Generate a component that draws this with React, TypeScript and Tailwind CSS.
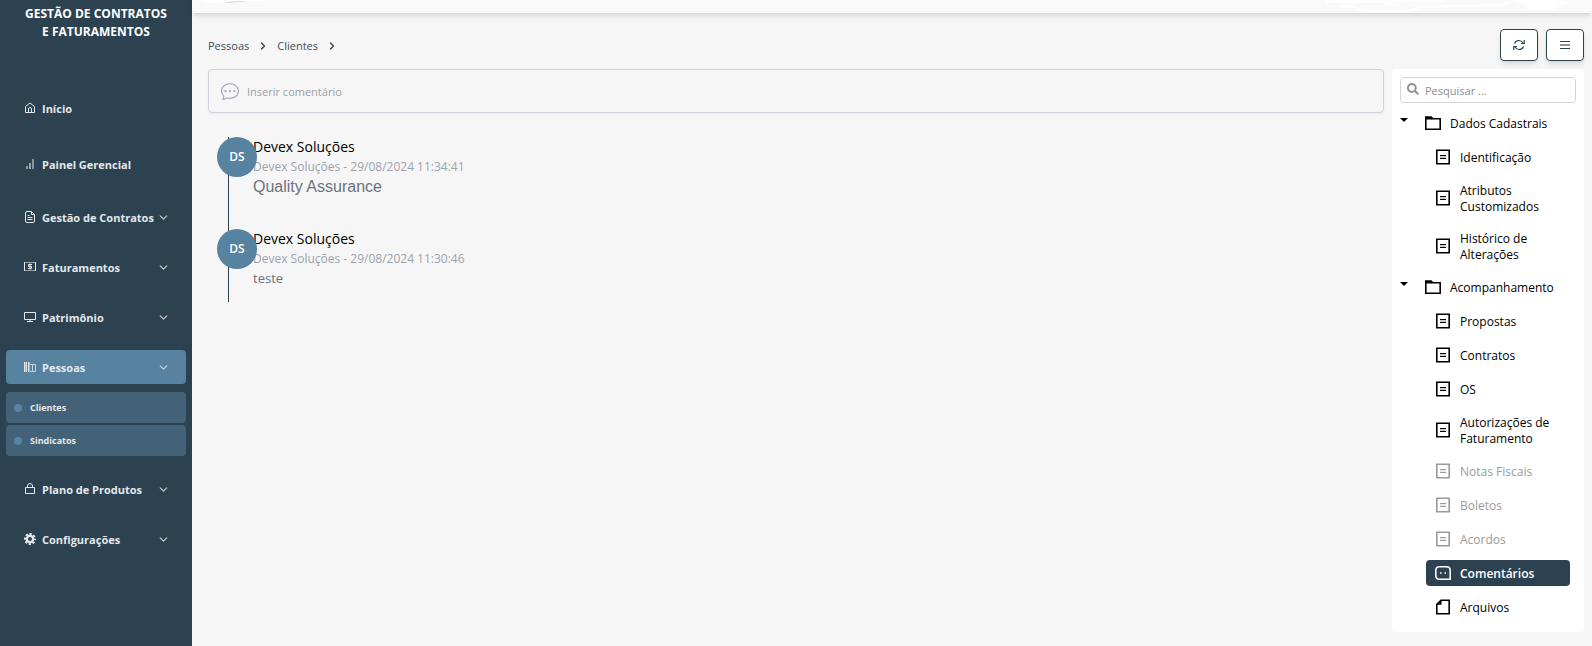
import { useState } from "react";
import type { ReactNode } from "react";
import { BsChatDots } from "react-icons/bs";
import { FaSearch } from "react-icons/fa";
import { ChevronDown, ChevronRight } from "lucide-react";

type MenuItem = {
  name: string;
  icon: ReactNode;
  space: string;
  children?: string[];
};

type TreeItem = {
  name: string;
  kind?: "chat" | "file";
  disabled?: boolean;
};

const HomeIcon = () => (
  <svg width="12" height="12" viewBox="0 0 12 12" fill="none" stroke="currentColor">
    <path d="M1.5 10.500V4.500L6 1l4.500 3.500v6z" />
    <path d="M4.500 10.500V7Q4.500 5.500 6 5.500T7.500 7v3.500" />
  </svg>
);

const BarsIcon = () => (
  <svg width="12" height="12" viewBox="0 0 12 12" fill="currentColor">
    <path d="M2 8h2v3H2z" opacity=".55" />
    <path d="M5 5h2v6H5z" opacity=".6" />
    <path d="M8 1h2v10H8z" opacity=".5" />
  </svg>
);

const DocIcon = () => (
  <svg width="12" height="12" viewBox="0 0 12 12" fill="none" stroke="currentColor">
    <path d="M3 .5h4.500l3 3V10q0 1.500-1.500 1.500H3Q1.500 11.500 1.500 10V2Q1.500.5 3 .5z" />
    <path d="M7.500.5v3h3M3.500 6.500h5M3.500 8.500h5M3.500 4.500h2" />
  </svg>
);

const FinanceIcon = () => (
  <svg width="12" height="12" viewBox="0 0 12 12" fill="none" stroke="currentColor">
    <path d="M.5 1v9M11.500 1v9" />
    <path d="M1 1.500h10M1 9.500h10" opacity=".6" />
    <path d="M8 3.500H4.500v2h3v2H4M6 2.500v6" />
  </svg>
);

const MonitorIcon = () => (
  <svg width="12" height="12" viewBox="0 0 12 12" fill="none" stroke="currentColor">
    <path d="M.500 1.500h11v7H.500zM6 8.500v2M3 10.500h6" />
  </svg>
);

const BuildingIcon = () => (
  <svg width="12" height="12" viewBox="0 0 12 12" fill="none" stroke="currentColor">
    <path d="M.500 1v10M2.500 1v10M4.500 1v10" />
    <path d="M1.500 1v10M5.500 1v10" opacity=".5" />
    <path d="M6 3.500h5.500v7H6M8.500 4v6" opacity=".8" />
  </svg>
);

const BagIcon = () => (
  <svg width="12" height="12" viewBox="0 0 12 12" fill="none" stroke="currentColor">
    <path d="M1.500 4.500h9v6h-9zM3.500 4.500V3q0-2.500 2.500-2.500T8.500 3v1.500" />
  </svg>
);

const GearIcon = () => (
  <svg width="12" height="12" viewBox="0 0 12 12" fill="none" stroke="currentColor">
    <circle cx="6" cy="6" r="3.200" strokeWidth="2.400" />
    <circle cx="6" cy="6" r="5" strokeWidth="2" strokeDasharray="2.200 1.727" strokeDashoffset="1.100" />
  </svg>
);

const RefreshIcon = () => (
  <svg width="12" height="12" viewBox="0 0 12 12" fill="none" stroke="currentColor" strokeWidth="1.200">
    <path d="M1.500 4.500Q2.500 1.500 6 1.500q2.500 0 4 2.500M11.300 1v3.500H8" />
    <path d="M10.500 7.500Q9.500 10.500 6 10.500 3.500 10.500 2 8M.700 11V7.500H4" />
  </svg>
);

const FolderIcon = () => (
  <svg width="16" height="14" viewBox="0 0 16 14" fill="none" stroke="currentColor" strokeWidth="1.600">
    <path d="M.8 2.800h14.400v10.400H.8z" />
    <path d="M0 1.300h6l1.500 1.500" strokeWidth="2" />
  </svg>
);

const DocumentIcon = () => (
  <svg width="14" height="16" viewBox="0 0 14 16" fill="none" stroke="currentColor">
    <path d="M.8 1.200h12.400v13.600H.8z" strokeWidth="1.600" />
    <path d="M4 6.500h6M4 9.500h6" />
    <path d="M4 7.500h6M4 8.500h6" opacity=".2" />
  </svg>
);

const ChatIcon = () => (
  <svg width="16" height="14" viewBox="0 0 16 14" fill="none" stroke="currentColor" strokeWidth="1.600">
    <path d="M4.500.800h7q3.700 0 3.700 3.700v8.700H4.500Q.800 13.200.800 9.500v-5Q.800.800 4.500.800z" />
    <path d="M5 7h1.500M9.500 7H11" />
  </svg>
);

const FileIcon = () => (
  <svg width="14" height="16" viewBox="0 0 14 16">
    <path d="M5 1.300h8.200v13.400H.800V5.300z" fill="none" stroke="currentColor" strokeWidth="1.600" />
    <path d="M5.500.500v5.300H.300z" fill="currentColor" />
  </svg>
);

const menu: MenuItem[] = [
  { name: "Início", icon: <HomeIcon />, space: "mb-[22px]" },
  { name: "Painel Gerencial", icon: <BarsIcon />, space: "mb-[19px]" },
  { name: "Gestão de Contratos", icon: <DocIcon />, space: "mb-4", children: [] },
  { name: "Faturamentos", icon: <FinanceIcon />, space: "mb-4", children: [] },
  { name: "Patrimônio", icon: <MonitorIcon />, space: "mb-4", children: [] },
  { name: "Pessoas", icon: <BuildingIcon />, space: "mb-4", children: ["Clientes", "Sindicatos"] },
  { name: "Plano de Produtos", icon: <BagIcon />, space: "mb-4", children: [] },
  { name: "Configurações", icon: <GearIcon />, space: "mb-4", children: [] },
];

const tree: { name: string; items: TreeItem[] }[] = [
  {
    name: "Dados Cadastrais",
    items: [
      { name: "Identificação" },
      { name: "Atributos Customizados" },
      { name: "Histórico de Alterações" },
    ],
  },
  {
    name: "Acompanhamento",
    items: [
      { name: "Propostas" },
      { name: "Contratos" },
      { name: "OS" },
      { name: "Autorizações de Faturamento" },
      { name: "Notas Fiscais", disabled: true },
      { name: "Boletos", disabled: true },
      { name: "Acordos", disabled: true },
      { name: "Comentários", kind: "chat" },
      { name: "Arquivos", kind: "file" },
    ],
  },
];

const comments = [
  { author: "Devex Soluções", date: "29/08/2024 11:34:41", text: "Quality Assurance", rich: true },
  { author: "Devex Soluções", date: "29/08/2024 11:30:46", text: "teste", rich: false },
];

function Sidebar() {
  return (
    <aside className="w-48 shrink-0 bg-[#2c4251] px-1.5 pt-[5px] text-[#e4e8eb]">
      <h1 className="text-center text-[12px] leading-[18px] font-bold text-white">
        GESTÃO DE CONTRATOS
        <br />E FATURAMENTOS
      </h1>

      <nav className="mt-[50px]">
        {menu.map((item) => (
          <div key={item.name} className={item.space}>
            <button
              className={`flex h-[34px] w-full items-center rounded pr-4 pl-[18px] text-[11px] font-bold ${
                item.name === "Pessoas" ? "bg-[#5782a0]" : ""
              }`}
            >
              <span className="flex w-3 shrink-0 justify-center">{item.icon}</span>
              <span className="ml-1.5 grow pt-0.5 text-left whitespace-nowrap">{item.name}</span>
              {item.children && <ChevronDown size={13} strokeWidth={2.5} className="shrink-0 opacity-80" />}
            </button>

            {item.children && item.children.length > 0 && (
              <ul className="mt-2 space-y-0.5">
                {item.children.map((child) => (
                  <li key={child}>
                    <a href="#" className="flex h-[31px] items-center gap-2 rounded bg-[#436278] pl-2 text-[9px] font-bold">
                      <span className="size-2 rounded-full bg-[#5782a0]" />
                      {child}
                    </a>
                  </li>
                ))}
              </ul>
            )}
          </div>
        ))}
      </nav>
    </aside>
  );
}

function Comments() {
  return (
    <section className="min-w-0 grow">
      <label className="flex h-11 items-center gap-2 rounded border border-[#d1d3dc] px-3 text-[#a0a4af] shadow-xs">
        <BsChatDots size={18} className="shrink-0" />
        <input
          type="text"
          aria-label="Inserir comentário"
          placeholder="Inserir comentário"
          className="grow bg-transparent pt-0.5 text-[11px] outline-none placeholder:text-[#9ca0ab]"
        />
      </label>

      <ul className="mt-6 ml-5 w-fit border-l border-[#2c4251]">
        {comments.map((comment) => (
          <li key={comment.date} className="relative h-[92px] pl-6 last:h-[73px]">
            <p className="text-[14px] leading-[19px] text-black">{comment.author}</p>
            <p className="text-[12px] leading-[22px] text-[#9ca3af]">
              {comment.author} - {comment.date}
            </p>
            <p
              className={
                comment.rich
                  ? "font-['Liberation_Sans',sans-serif] text-[16px] leading-[18px] text-[#6b7280]"
                  : "text-[13px] leading-4 text-[#6b7280]"
              }
            >
              {comment.text}
            </p>
            <span className="absolute top-0 -left-3 flex size-10 items-center justify-center rounded-full bg-[#5782a0] text-[12px] font-semibold text-white">
              DS
            </span>
          </li>
        ))}
      </ul>
    </section>
  );
}

function TreePanel() {
  const [active, setActive] = useState("Comentários");

  return (
    <aside className="w-48 shrink-0 rounded bg-white px-2 pt-2 pb-3 text-[12px] text-black">
      <label className="flex h-[26px] items-center gap-1.5 rounded border border-[#d5d5d5] px-1.5 text-[#929292]">
        <FaSearch size={12} className="mb-0.5 shrink-0" />
        <input
          type="text"
          aria-label="Pesquisar"
          placeholder="Pesquisar ..."
          className="w-full min-w-0 bg-transparent pt-0.5 text-[11px] outline-none placeholder:text-[#8c8c8c]"
        />
      </label>

      <div className="mt-[7px] flex flex-col gap-2">
        {tree.map((group) => (
          <div key={group.name} className="flex flex-col gap-2">
            <button className="flex h-[26px] items-center text-left">
              <svg width="8" height="4" viewBox="0 0 8 4" className="mb-1.5 shrink-0">
                <path d="M0 0h8L4 4z" fill="currentColor" />
              </svg>
              <span className="mr-[9px] ml-[17px]">
                <FolderIcon />
              </span>
              <span className="pt-0.5">{group.name}</span>
            </button>

            {group.items.map((item) => (
              <button
                key={item.name}
                disabled={item.disabled}
                onClick={() => setActive(item.name)}
                className={`mr-1.5 ml-[26px] flex min-h-[26px] items-center rounded py-[3px] pr-5 pl-[9px] text-left leading-4 disabled:text-[#9a9a9a] ${
                  active === item.name ? "bg-[#2c4251] font-semibold text-white" : ""
                }`}
              >
                <span className="mr-[9px] flex w-4 shrink-0 justify-center">
                  {item.kind === "chat" ? <ChatIcon /> : item.kind === "file" ? <FileIcon /> : <DocumentIcon />}
                </span>
                <span className="pt-0.5">{item.name}</span>
              </button>
            ))}
          </div>
        ))}
      </div>
    </aside>
  );
}

export default function App() {
  return (
    <div className="flex min-h-screen bg-[#f6f6f6] font-['Open_Sans',sans-serif]">
      <Sidebar />

      <div className="flex min-w-0 grow flex-col">
        <header className="flex h-[13px] items-start justify-between bg-[#fafafa] pl-2 shadow-md">
          <svg width="66" height="5" viewBox="0 0 66 5">
            <path d="M28 1h20l-6 1-10 .800-8 .200z" fill="#dcdcdc" />
            <path d="M0 0h66l-4 1H42L30 1.500 16 3 4 3z" fill="#fff" />
          </svg>
          <svg width="270" height="13" viewBox="0 0 270 13" fill="none" stroke="#fff" strokeWidth="2">
            <path d="M4 1.500h66l50-1M20 6l14 1 6 4h48l10-4 80-2 10-3" />
            <path d="M192 1h40l12 2-12 5h-28l8-3z" fill="#fff" />
            <path d="M62 5h16" />
          </svg>
        </header>

        <main className="pt-4 pr-2 pb-[14px] pl-4">
          <div className="flex items-center justify-between">
            <nav className="flex items-center gap-2 pt-0.5 text-[11px] text-[#434c58]">
              <a href="#">Pessoas</a>
              <ChevronRight size={12} strokeWidth={3} />
              <a href="#">Clientes</a>
              <ChevronRight size={12} strokeWidth={3} />
            </nav>

            <div className="flex gap-2">
              <button aria-label="Atualizar" className="flex h-8 w-[38px] items-center justify-center rounded border border-[#2c4251] bg-white text-[#2c4251] shadow-md">
                <RefreshIcon />
              </button>
              <button aria-label="Menu" className="flex h-8 w-[38px] items-center justify-center rounded border border-[#2c4251] bg-white text-[#2c4251] shadow-md">
                <svg width="10" height="10" viewBox="0 0 10 10" stroke="currentColor">
                  <path d="M0 1.500h10M0 8.500h10" />
                  <path d="M0 5h10" strokeWidth="2" opacity=".55" />
                </svg>
              </button>
            </div>
          </div>

          <div className="mt-2 flex items-start gap-2">
            <Comments />
            <TreePanel />
          </div>
        </main>
      </div>
    </div>
  );
}
